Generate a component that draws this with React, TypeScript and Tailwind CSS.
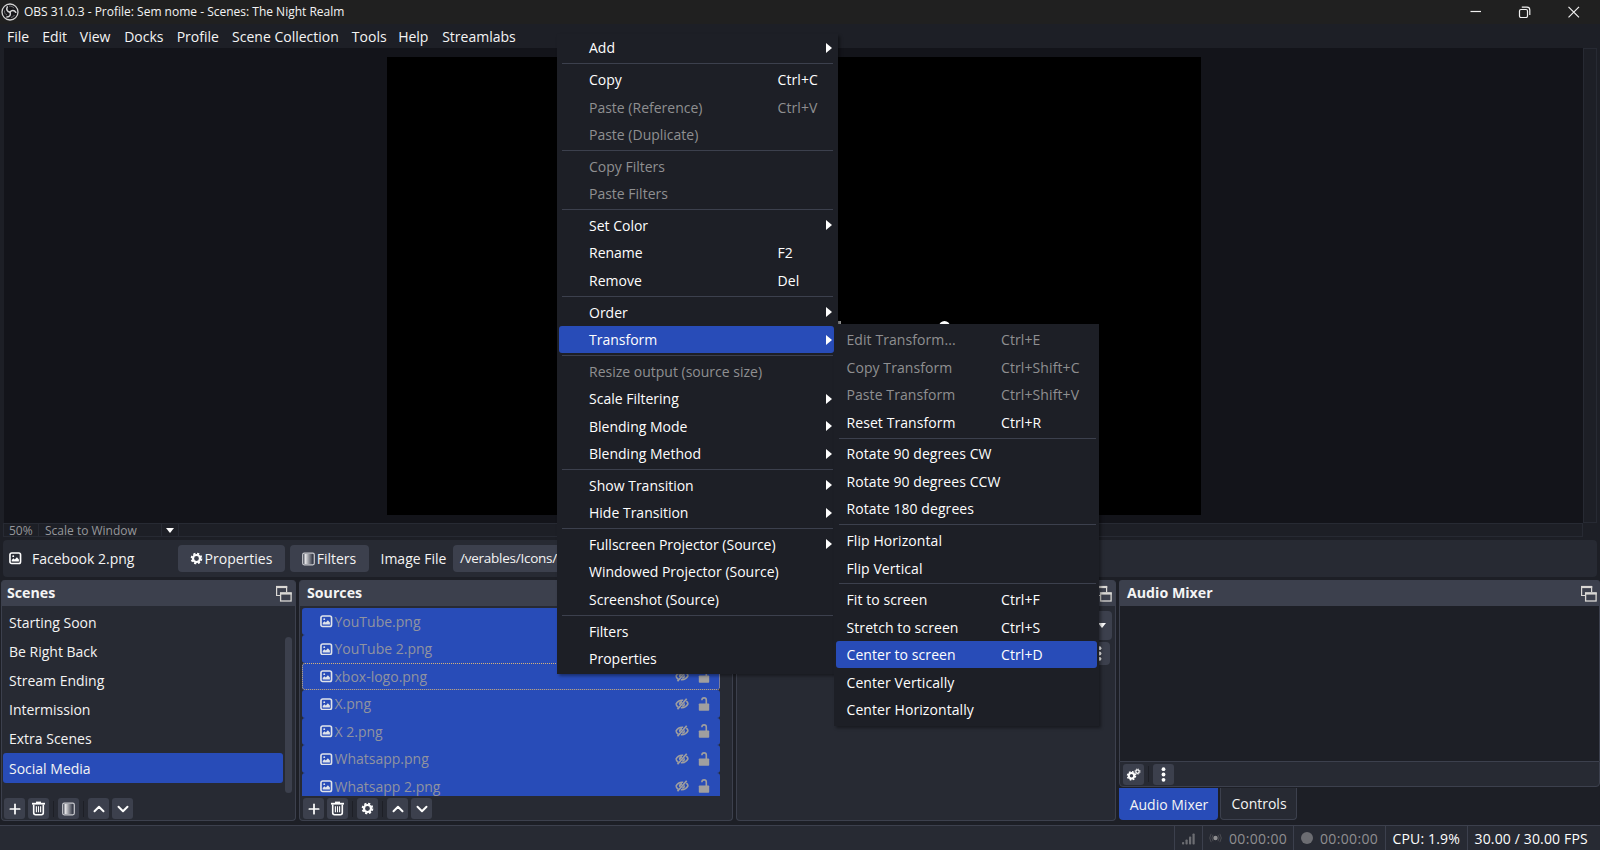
import type { ReactNode } from 'react';
import { ChevronDown, ChevronUp, Plus } from 'lucide-react';

interface MenuEntry {
  label?: string;
  shortcut?: string;
  submenu?: boolean;
  disabled?: boolean;
  active?: boolean;
  separator?: boolean;
}

const menuBar = [
  { label: 'File', width: 'w-[35.2px]' },
  { label: 'Edit', width: 'w-[37.6px]' },
  { label: 'View', width: 'w-[44.4px]' },
  { label: 'Docks', width: 'w-[52.5px]' },
  { label: 'Profile', width: 'w-[55.4px]' },
  { label: 'Scene Collection', width: 'w-[119.8px]' },
  { label: 'Tools', width: 'w-[46.3px]' },
  { label: 'Help', width: 'w-[44px]' },
  { label: 'Streamlabs', width: 'w-[80px]' },
];

const sourceMenu: MenuEntry[] = [
  { label: 'Add', submenu: true },
  { separator: true },
  { label: 'Copy', shortcut: 'Ctrl+C' },
  { label: 'Paste (Reference)', shortcut: 'Ctrl+V', disabled: true },
  { label: 'Paste (Duplicate)', disabled: true },
  { separator: true },
  { label: 'Copy Filters', disabled: true },
  { label: 'Paste Filters', disabled: true },
  { separator: true },
  { label: 'Set Color', submenu: true },
  { label: 'Rename', shortcut: 'F2' },
  { label: 'Remove', shortcut: 'Del' },
  { separator: true },
  { label: 'Order', submenu: true },
  { label: 'Transform', submenu: true, active: true },
  { separator: true },
  { label: 'Resize output (source size)', disabled: true },
  { label: 'Scale Filtering', submenu: true },
  { label: 'Blending Mode', submenu: true },
  { label: 'Blending Method', submenu: true },
  { separator: true },
  { label: 'Show Transition', submenu: true },
  { label: 'Hide Transition', submenu: true },
  { separator: true },
  { label: 'Fullscreen Projector (Source)', submenu: true },
  { label: 'Windowed Projector (Source)' },
  { label: 'Screenshot (Source)' },
  { separator: true },
  { label: 'Filters' },
  { label: 'Properties' },
];

const transformMenu: MenuEntry[] = [
  { label: 'Edit Transform...', shortcut: 'Ctrl+E', disabled: true },
  { label: 'Copy Transform', shortcut: 'Ctrl+Shift+C', disabled: true },
  { label: 'Paste Transform', shortcut: 'Ctrl+Shift+V', disabled: true },
  { label: 'Reset Transform', shortcut: 'Ctrl+R' },
  { separator: true },
  { label: 'Rotate 90 degrees CW' },
  { label: 'Rotate 90 degrees CCW' },
  { label: 'Rotate 180 degrees' },
  { separator: true },
  { label: 'Flip Horizontal' },
  { label: 'Flip Vertical' },
  { separator: true },
  { label: 'Fit to screen', shortcut: 'Ctrl+F' },
  { label: 'Stretch to screen', shortcut: 'Ctrl+S' },
  { label: 'Center to screen', shortcut: 'Ctrl+D', active: true },
  { label: 'Center Vertically' },
  { label: 'Center Horizontally' },
];

const scenes = ['Starting Soon', 'Be Right Back', 'Stream Ending', 'Intermission', 'Extra Scenes', 'Social Media'];

const sources = ['YouTube.png', 'YouTube 2.png', 'xbox-logo.png', 'X.png', 'X 2.png', 'Whatsapp.png', 'Whatsapp 2.png'];

function ObsLogo() {
  return (
    <svg className="size-[18px]" viewBox="0 0 18 18" fill="none">
      <circle cx="9" cy="9" r="8" fill="#17171a" stroke="#d4d4d4" strokeWidth="1.3" />
      <g stroke="#d4d4d4" strokeWidth="1.5" strokeLinecap="round">
        <path d="M9 9.2C6.2 9 5 6.4 6.3 3.8" />
        <path d="M9 9.2C10.5 6.8 13.4 6.9 14.8 9.3" />
        <path d="M9 9.2C10.2 11.8 8.6 14.1 5.9 14.1" />
      </g>
      <path d="M3.5 7.5C3.2 10 4.5 11.5 6 12M8 3.2C10.5 2.7 12.3 4 13 5.2M13.5 12C12.8 13.5 11.3 14.3 10 14.4" stroke="#aaa" strokeWidth=".6" />
    </svg>
  );
}

function ImageIcon({ fill = '#dfe3ea' }: { fill?: string }) {
  return (
    <svg className="size-[12.5px] shrink-0" viewBox="0 0 13 13" fill="none">
      <rect x="1" y="1" width="11" height="11" rx="1.8" stroke={fill} strokeWidth="1.7" />
      <path d="M2.8 10V8.3l1.8-1.7 1.4 1.2 2.2-2.4 2.1 2.4V10z" fill={fill} />
      <circle cx="4.4" cy="4.3" r="1" fill={fill} />
    </svg>
  );
}

function GearShape({ r = 4.6, hole = 2.4 }: { r?: number; hole?: number }) {
  return (
    <g fill="none" stroke="#fefefe">
      <circle r={(r + hole) / 2} strokeWidth={r - hole} />
      <circle r={r + 0.3} strokeWidth={r * 0.4} strokeDasharray={`${(r + 0.3) * 0.44} ${(r + 0.3) * 0.3454}`} />
    </g>
  );
}

function GearIcon() {
  return (
    <svg className="size-[13px] shrink-0" viewBox="-6.5 -6.5 13 13">
      <GearShape />
    </svg>
  );
}

function GearsIcon() {
  return (
    <svg className="size-[15px]" viewBox="0 0 15 15">
      <g transform="translate(5.5 8.8)"><GearShape r={3.7} hole={1.7} /></g>
      <g transform="translate(11.5 4.6)"><GearShape r={2.3} hole={1.1} /></g>
    </svg>
  );
}

function FilterIcon() {
  return (
    <svg className="h-[14px] w-[13px] shrink-0" viewBox="0 0 13 14">
      <defs>
        <linearGradient id="filter-fade">
          <stop offset="0.1" stopColor="#e8e8ea" />
          <stop offset="1" stopColor="#e8e8ea" stopOpacity="0" />
        </linearGradient>
      </defs>
      <rect x=".7" y="1.2" width="11.6" height="11.6" rx="1.5" fill="none" stroke="#c9cacf" strokeWidth="1.2" />
      <rect x="2.4" y="2" width="8" height="10" fill="url(#filter-fade)" />
    </svg>
  );
}

function TrashIcon() {
  return (
    <svg className="size-[15px]" viewBox="0 0 15 15" fill="none" stroke="#fefefe">
      <path d="M1 2.7h13" strokeWidth="1.8" />
      <path d="M5 1.3h5" strokeWidth="1.4" />
      <path d="M2.7 3.5v8.3q0 1.9 1.9 1.9h5.8q1.9 0 1.9-1.9V3.5" strokeWidth="1.6" />
      <path d="M5.4 5.2v6M7.5 5.2v6M9.6 5.2v6" strokeWidth="1.1" />
    </svg>
  );
}

function FloatIcon() {
  return (
    <svg className="h-[17px] w-[17px] shrink-0" viewBox="0 0 17 17" fill="none" stroke="#d9d7d4">
      <path d="M5 10.5H1.6V1.5h10V7" strokeWidth="1.2" />
      <path d="M1 2h11.2" strokeWidth="2.2" />
      <rect x="5.6" y="8" width="10.5" height="8" strokeWidth="1.3" />
      <path d="M5 8.5h11.7" strokeWidth="2.2" />
    </svg>
  );
}

function HiddenIcon() {
  return (
    <svg className="h-[12px] w-[14px]" viewBox="0 0 14 12" fill="none" stroke="#a09f9f">
      <path d="M.9 6.3C2.5 3.2 5 2 8.2 2.3M1 6.3c.5 1.3 1.3 2.3 2.3 2.9M13.1 5.7c-1.6 3.1-4 4.3-7.2 4M11.3 3.2c.8.7 1.4 1.5 1.8 2.5" strokeWidth="1.6" />
      <path d="M2.5 11.3 11.7.7" strokeWidth="1.7" />
      <path d="M5 6.8q-.6-2.5 2-3" strokeWidth="2" />
      <path d="M9.2 5.3q.5 2.3-2 2.9" strokeWidth="1.4" />
    </svg>
  );
}

function UnlockIcon() {
  return (
    <svg className="h-[14px] w-[12px]" viewBox="0 0 12 14" fill="none">
      <rect x=".8" y="6.5" width="10.4" height="7.2" rx=".8" fill="#a09f9f" />
      <path d="M3.9 3.3v-.2a2.2 2.2 0 0 1 4.4 0V7" stroke="#a09f9f" strokeWidth="1.6" />
    </svg>
  );
}

function ToolButton({ children }: { children: ReactNode }) {
  return <div className="flex size-[21px] items-center justify-center rounded-[3px] bg-[#3c404d] text-[#fefefe]">{children}</div>;
}

function ToolSeparator() {
  return <div className="mx-1 h-4 w-px bg-[#1d1f26]" />;
}

function DockHeader({ title, indent = 'pl-[7px]' }: { title?: string; indent?: string }) {
  return (
    <div className={`flex h-[26px] shrink-0 items-center justify-between rounded-t-[3px] bg-[#3c404d] pr-[3px] text-[14.2px] font-bold ${indent}`}>
      <span>{title}</span>
      <FloatIcon />
    </div>
  );
}

function MenuRow({ entry, indent, gutter }: { entry: MenuEntry; indent: string; gutter: string }) {
  if (entry.separator) {
    return (
      <div className="flex h-[4.15px] items-center pr-px pl-[3px]">
        <div className="h-px w-full bg-[#3c404d]" />
      </div>
    );
  }
  return (
    <div
      className={`flex h-[27.5px] items-center rounded-[3px] ${indent} ${entry.active ? 'bg-[#284cb8]' : ''} ${
        entry.disabled ? 'text-[#8f8f91]' : 'text-[#fefefe]'
      }`}
    >
      <span className={gutter}>{entry.label}</span>
      <span className="flex-1 tracking-[0.1px]">{entry.shortcut}</span>
      {entry.submenu && <div className="mr-[2px] border-y-[5px] border-l-[6px] border-y-transparent border-l-[#fefefe]" />}
    </div>
  );
}

function PreviewArea() {
  return (
    <>
      <div className="flex h-[475px] pl-1">
        <div className="w-[1579px] bg-[#13141a] pt-[9px] pl-[383px]">
          <div className="h-[458px] w-[814px] bg-black" />
        </div>
        <div className="w-[14px] border border-[#272a33]" />
      </div>
      <div className="flex h-[14px] pl-[3px] text-[12px] leading-[14px] text-[#96979b]">
        <div className="w-[36px] border border-[#272a33] pl-[5px]"><span className="relative -top-[0.5px]">50%</span></div>
        <div className="w-[122px] border-y border-[#272a33] pl-[6px]"><span className="relative -top-[0.5px]">Scale to Window</span></div>
        <div className="flex w-[18px] items-center justify-center border border-[#272a33]">
          <div className="border-x-4 border-t-[5px] border-x-transparent border-t-[#fefefe]" />
        </div>
        <div className="w-[1404px] border-y border-r border-[#272a33]" />
      </div>
    </>
  );
}

function ContextBar() {
  return (
    <div className="mx-[3px] mt-[3px] flex h-[37px] items-center rounded bg-[#272a33] pl-[6px]">
      <ImageIcon fill="#fefefe" />
      <span className="ml-[10.5px] w-[145.5px]">Facebook 2.png</span>
      <div className="flex h-[27px] w-[107px] items-center justify-center gap-0.5 rounded bg-[#3c404d]">
        <GearIcon />
        <span>Properties</span>
      </div>
      <div className="ml-[5px] flex h-[27px] w-[79px] items-center justify-center gap-0.5 rounded bg-[#3c404d]">
        <FilterIcon />
        <span>Filters</span>
      </div>
      <span className="ml-[12px] w-[72.5px]">Image File</span>
      <div className="flex h-[27px] w-[400px] items-center rounded bg-[#3c404d] pl-[7px] text-[13.5px] tracking-[-0.25px]">/verables/Icons/</div>
    </div>
  );
}

function ScenesDock() {
  return (
    <section className="flex w-[295px] flex-col rounded border border-t-0 border-[#3c404d] bg-[#272a33]">
      <DockHeader title="Scenes" indent="pl-[5px]" />
      <div className="flex h-[192px] justify-between pt-[2px] pr-[3px] pl-px">
        <div className="w-[280px]">
          {scenes.map((scene) => (
            <div
              key={scene}
              className={`flex h-[29.1px] items-center rounded-[3px] pl-[6px] ${scene === 'Social Media' ? 'bg-[#284cb8]' : ''}`}
            >
              {scene}
            </div>
          ))}
        </div>
        <div className="mt-[29px] h-[156px] w-[7px] rounded-sm bg-[#3c404d]" />
      </div>
      <div className="flex items-center pl-[2px]">
        <ToolButton><Plus size={16} strokeWidth={2.6} /></ToolButton>
        <div className="w-[3px]" />
        <ToolButton><TrashIcon /></ToolButton>
        <ToolSeparator />
        <ToolButton><FilterIcon /></ToolButton>
        <ToolSeparator />
        <ToolButton><ChevronUp size={18} strokeWidth={2.6} /></ToolButton>
        <div className="w-[3px]" />
        <ToolButton><ChevronDown size={18} strokeWidth={2.6} /></ToolButton>
      </div>
    </section>
  );
}

function SourcesDock() {
  return (
    <section className="ml-[3px] flex w-[434px] flex-col rounded border border-t-0 border-[#3c404d] bg-[#272a33]">
      <DockHeader title="Sources" />
      <div className="ml-[2px] h-[192px] w-[418px] overflow-hidden pt-[1.5px] pb-[2.5px]">
        <div className="h-[188px] overflow-hidden">
          {sources.map((source) => (
            <div
              key={source}
              className={`flex h-[27.5px] items-center rounded-[3px] bg-[#284cb8] pr-[9px] pl-[17px] text-[#9093a0] ${
                source === 'xbox-logo.png' ? 'border border-dotted border-[#d5b27c]' : 'border border-transparent'
              }`}
            >
              <ImageIcon />
              <span className="ml-[2px] flex-1">{source}</span>
              <HiddenIcon />
              <div className="w-[9px]" />
              <UnlockIcon />
            </div>
          ))}
        </div>
      </div>
      <div className="flex items-center pl-[3px]">
        <ToolButton><Plus size={16} strokeWidth={2.6} /></ToolButton>
        <div className="w-[3px]" />
        <ToolButton><TrashIcon /></ToolButton>
        <ToolSeparator />
        <ToolButton><GearIcon /></ToolButton>
        <ToolSeparator />
        <ToolButton><ChevronUp size={18} strokeWidth={2.6} /></ToolButton>
        <div className="w-[3px]" />
        <ToolButton><ChevronDown size={18} strokeWidth={2.6} /></ToolButton>
      </div>
    </section>
  );
}

function DotsIcon() {
  return (
    <svg className="h-[15px] w-[5px]" viewBox="0 0 5 15" fill="#fefefe">
      <circle cx="2.5" cy="2.2" r="1.9" />
      <circle cx="2.5" cy="7.5" r="1.9" />
      <circle cx="2.5" cy="12.8" r="1.9" />
    </svg>
  );
}

function TransitionsDock() {
  return (
    <section className="ml-[3px] flex w-[380px] flex-col rounded border border-t-0 border-[#3c404d] bg-[#272a33]">
      <DockHeader />
      <div className="mt-[5px] mr-[3px] ml-[3px] flex h-[29px] items-center justify-end rounded bg-[#3c404d] pr-[6px]">
        <div className="border-x-4 border-t-[5px] border-x-transparent border-t-[#fefefe]" />
      </div>
      <div className="mt-[2px] mr-[5px] flex h-[23px] w-[24px] items-center self-end rounded bg-[#3c404d] pl-[11px]">
        <DotsIcon />
      </div>
    </section>
  );
}

function MixerDock() {
  return (
    <section className="ml-[3px] flex w-[481px] flex-col">
      <DockHeader title="Audio Mixer" indent="pl-[8px]" />
      <div className="h-[155px] border-x border-[#3c404d] bg-[#1d1f26]" />
      <div className="flex h-[26px] items-center rounded-b border border-[#3c404d] bg-[#272a33] pl-[3px]">
        <ToolButton><GearsIcon /></ToolButton>
        <ToolSeparator />
        <ToolButton><DotsIcon /></ToolButton>
      </div>
      <div className="flex h-[33px] gap-[2px] pt-px">
        <div className="flex w-[99px] items-center justify-center rounded-b bg-[#284cb8] pl-px">Audio Mixer</div>
        <div className="flex w-[77px] items-center justify-center rounded-b border border-t-0 border-[#3c404d] bg-[#272a33] pl-px">Controls</div>
      </div>
    </section>
  );
}

function StatusBar() {
  return (
    <footer className="flex h-[25px] justify-end border-t border-[#3c404d] bg-[#272a33] text-[#fefefe]">
      <div className="flex w-[28px] items-center border-l border-[#3c404d] pl-[7px]">
        <svg className="h-[13px] w-[13px]" viewBox="0 0 13 13" fill="#6c6d72">
          <rect x="0" y="10" width="2.2" height="2.5" rx=".8" />
          <rect x="3.5" y="7.5" width="2.2" height="5" rx=".8" />
          <rect x="7" y="4.5" width="2.2" height="8" rx=".8" />
          <rect x="10.5" y="1.5" width="2.2" height="11" rx=".8" />
        </svg>
      </div>
      <div className="flex w-[91px] items-center border-l border-[#3c404d] pl-[6px] tracking-[0.35px] text-[#8f8f91]">
        <svg className="mr-[7px] h-[12px] w-[13px]" viewBox="0 0 13 12" fill="none" stroke="#4b4c52">
          <circle cx="6.5" cy="6" r="2.2" fill="#8f8f91" stroke="none" />
          <path d="M4 2.8Q1.8 6 4 9.2M9 2.8Q11.2 6 9 9.2M2.2 1.8Q-.8 6 2.2 10.2M10.8 1.8Q13.8 6 10.8 10.2" />
        </svg>
        00:00:00
      </div>
      <div className="flex w-[92px] items-center border-l border-[#3c404d] pl-[7px] tracking-[0.35px] text-[#8f8f91]">
        <div className="mr-[7px] size-[12px] rounded-full bg-[#6c6d72]" />
        00:00:00
      </div>
      <div className="flex w-[82px] items-center border-l border-[#3c404d] pl-[6.5px] tracking-[0.15px]">CPU: 1.9%</div>
      <div className="flex w-[133px] items-center border-l border-[#3c404d] pl-[6.5px] tracking-[0.15px]">30.00 / 30.00 FPS</div>
    </footer>
  );
}

export default function App() {
  return (
    <div className="relative flex h-[850px] w-[1600px] flex-col overflow-hidden bg-[#1d1f26] font-['Open_Sans','Noto_Sans',sans-serif] text-[14px] whitespace-nowrap text-[#f4f4f4]">
      <header className="flex h-6 items-center bg-[#202020] pl-[1px] text-[12px]">
        <ObsLogo />
        <span className="ml-[5px] flex-1">OBS 31.0.3 - Profile: Sem nome - Scenes: The Night Realm</span>
        <svg className="mr-[20px] h-[12px] w-[110px]" viewBox="0 0 110 12" fill="none" stroke="#f0f0f0" strokeWidth="1.2">
          <path d="M.5 5.5H11" />
          <rect x="49.5" y="3.5" width="8" height="8" rx="1.5" />
          <path d="M51.8 1.2H57q2.8 0 2.8 2.8v5" />
          <path d="m98.5.8 10.5 10.5M109 .8 98.5 11.3" />
        </svg>
      </header>
      <nav className="flex h-6 items-center pt-px pl-[7px]">
        {menuBar.map((item) => (
          <span key={item.label} className={item.width}>{item.label}</span>
        ))}
      </nav>
      <PreviewArea />
      <ContextBar />
      <main className="mt-[3px] flex h-[241px] pl-[1px]">
        <ScenesDock />
        <SourcesDock />
        <TransitionsDock />
        <MixerDock />
      </main>
      <div className="h-1 shrink-0" />
      <StatusBar />

      {/* selection handles of the source */}
      <div className="absolute top-[321px] left-[838px] size-[3px] bg-[#a9a9a9]" />
      <div className="absolute top-[321px] left-[939px] size-[11px] rounded-full bg-white" />

      <div className="absolute top-[34px] left-[557px] h-[640px] w-[281px] bg-[#1d1f26] pt-[0.2px] pr-[4px] pl-[2px] shadow-[2px_2px_3px_rgba(0,0,0,0.4)]">
        {sourceMenu.map((entry, i) => (
          <MenuRow key={i} entry={entry} indent="pl-[30px]" gutter="w-[188.5px]" />
        ))}
      </div>
      <div className="absolute top-[324px] left-[834px] h-[401.5px] w-[265px] bg-[#1d1f26] pt-[2px] pr-[2px] pl-[2px] shadow-[2px_2px_3px_rgba(0,0,0,0.4)]">
        {transformMenu.map((entry, i) => (
          <MenuRow key={i} entry={entry} indent="pl-[10.5px]" gutter="w-[154.5px] tracking-[0.08px]" />
        ))}
      </div>
    </div>
  );
}
